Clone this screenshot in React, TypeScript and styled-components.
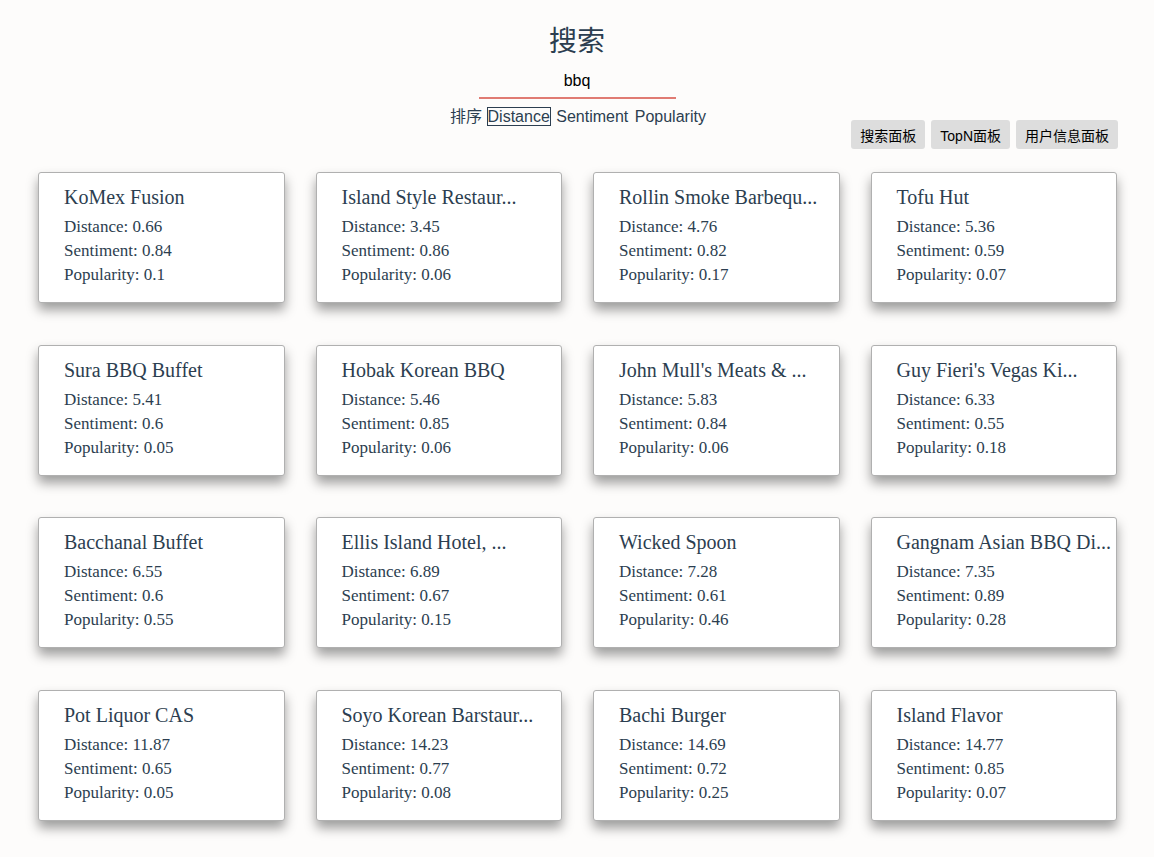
import styled, { createGlobalStyle } from 'styled-components';

const GlobalStyle = createGlobalStyle`
  body {
    margin: 8px;
    background-color: #fdfcfb;
    font-family: 'Liberation Sans', 'Noto Sans CJK SC', sans-serif;
    color: #2c3e50;
  }
`;

const Page = styled.div`
  display: flex;
  flex-direction: column;
  align-items: center;
  padding-bottom: 40px;
`;

const Title = styled.h1`
  margin: 17px 0 0;
  font-size: 28px;
  line-height: 34px;
  font-weight: normal;
  color: #2c3e50;
`;

const SearchInput = styled.input`
  margin-top: 6px;
  width: 197px;
  height: 32px;
  padding: 0;
  border: none;
  border-bottom: 2px solid #e07b73;
  background: transparent;
  text-align: center;
  font-family: 'Liberation Sans', sans-serif;
  font-size: 16px;
  color: #000;
  outline: none;
`;

const SortRow = styled.div`
  margin-top: 8px;
  font-size: 16px;
  line-height: 20px;
  white-space: pre;
  padding-left: 3px;
`;

const SortOption = styled.span<{ $active?: boolean }>`
  border: 1px solid ${p => (p.$active ? '#2c3e50' : 'transparent')};
  cursor: pointer;
`;

const Toolbar = styled.div`
  align-self: stretch;
  display: flex;
  justify-content: flex-end;
  gap: 6px;
  margin-top: -7px;
  padding-right: 28px;
`;

const PanelButton = styled.button`
  height: 29px;
  padding: 0 9px;
  border: none;
  border-radius: 3px;
  background-color: #dddddd;
  font-family: 'Liberation Sans', 'Noto Sans CJK SC', sans-serif;
  font-size: 14px;
  color: #000;
  cursor: pointer;
`;

const Grid = styled.div`
  align-self: stretch;
  display: grid;
  grid-template-columns: repeat(4, 1fr);
  column-gap: 31px;
  row-gap: 41.5px;
  margin-top: 23px;
  padding: 0 29px 0 30px;
`;

const Card = styled.div`
  background-color: #fff;
  border: 1px solid #b0b0b0;
  border-radius: 3px;
  box-shadow: 0 7px 12px rgba(0, 0, 0, 0.38);
  padding: 12px 6px 15px 25px;
  font-family: 'Liberation Serif', serif;
  color: #2c3e50;
  overflow: hidden;
`;

const CardTitle = styled.div`
  font-size: 20px;
  line-height: 24px;
  white-space: nowrap;
  margin-bottom: 6px;
`;

const Stat = styled.div`
  font-size: 17px;
  line-height: 24px;
`;

type Place = { name: string; d: string; s: string; p: string };

const places: Place[] = [
  { name: 'KoMex Fusion', d: '0.66', s: '0.84', p: '0.1' },
  { name: 'Island Style Restaur...', d: '3.45', s: '0.86', p: '0.06' },
  { name: 'Rollin Smoke Barbequ...', d: '4.76', s: '0.82', p: '0.17' },
  { name: 'Tofu Hut', d: '5.36', s: '0.59', p: '0.07' },
  { name: 'Sura BBQ Buffet', d: '5.41', s: '0.6', p: '0.05' },
  { name: 'Hobak Korean BBQ', d: '5.46', s: '0.85', p: '0.06' },
  { name: "John Mull's Meats & ...", d: '5.83', s: '0.84', p: '0.06' },
  { name: "Guy Fieri's Vegas Ki...", d: '6.33', s: '0.55', p: '0.18' },
  { name: 'Bacchanal Buffet', d: '6.55', s: '0.6', p: '0.55' },
  { name: 'Ellis Island Hotel, ...', d: '6.89', s: '0.67', p: '0.15' },
  { name: 'Wicked Spoon', d: '7.28', s: '0.61', p: '0.46' },
  { name: 'Gangnam Asian BBQ Di...', d: '7.35', s: '0.89', p: '0.28' },
  { name: 'Pot Liquor CAS', d: '11.87', s: '0.65', p: '0.05' },
  { name: 'Soyo Korean Barstaur...', d: '14.23', s: '0.77', p: '0.08' },
  { name: 'Bachi Burger', d: '14.69', s: '0.72', p: '0.25' },
  { name: 'Island Flavor', d: '14.77', s: '0.85', p: '0.07' },
];

export default function App() {
  return (
    <>
      <GlobalStyle />
      <Page>
        <Title>搜索</Title>
        <SearchInput defaultValue="bbq" />
        <SortRow>
          排序 <SortOption $active>Distance</SortOption> <SortOption>Sentiment</SortOption>{' '}
          <SortOption>Popularity</SortOption>
        </SortRow>
        <Toolbar>
          <PanelButton>搜索面板</PanelButton>
          <PanelButton>TopN面板</PanelButton>
          <PanelButton>用户信息面板</PanelButton>
        </Toolbar>
        <Grid>
          {places.map(pl => (
            <Card key={pl.name}>
              <CardTitle>{pl.name}</CardTitle>
              <Stat>Distance: {pl.d}</Stat>
              <Stat>Sentiment: {pl.s}</Stat>
              <Stat>Popularity: {pl.p}</Stat>
            </Card>
          ))}
        </Grid>
      </Page>
    </>
  );
}
